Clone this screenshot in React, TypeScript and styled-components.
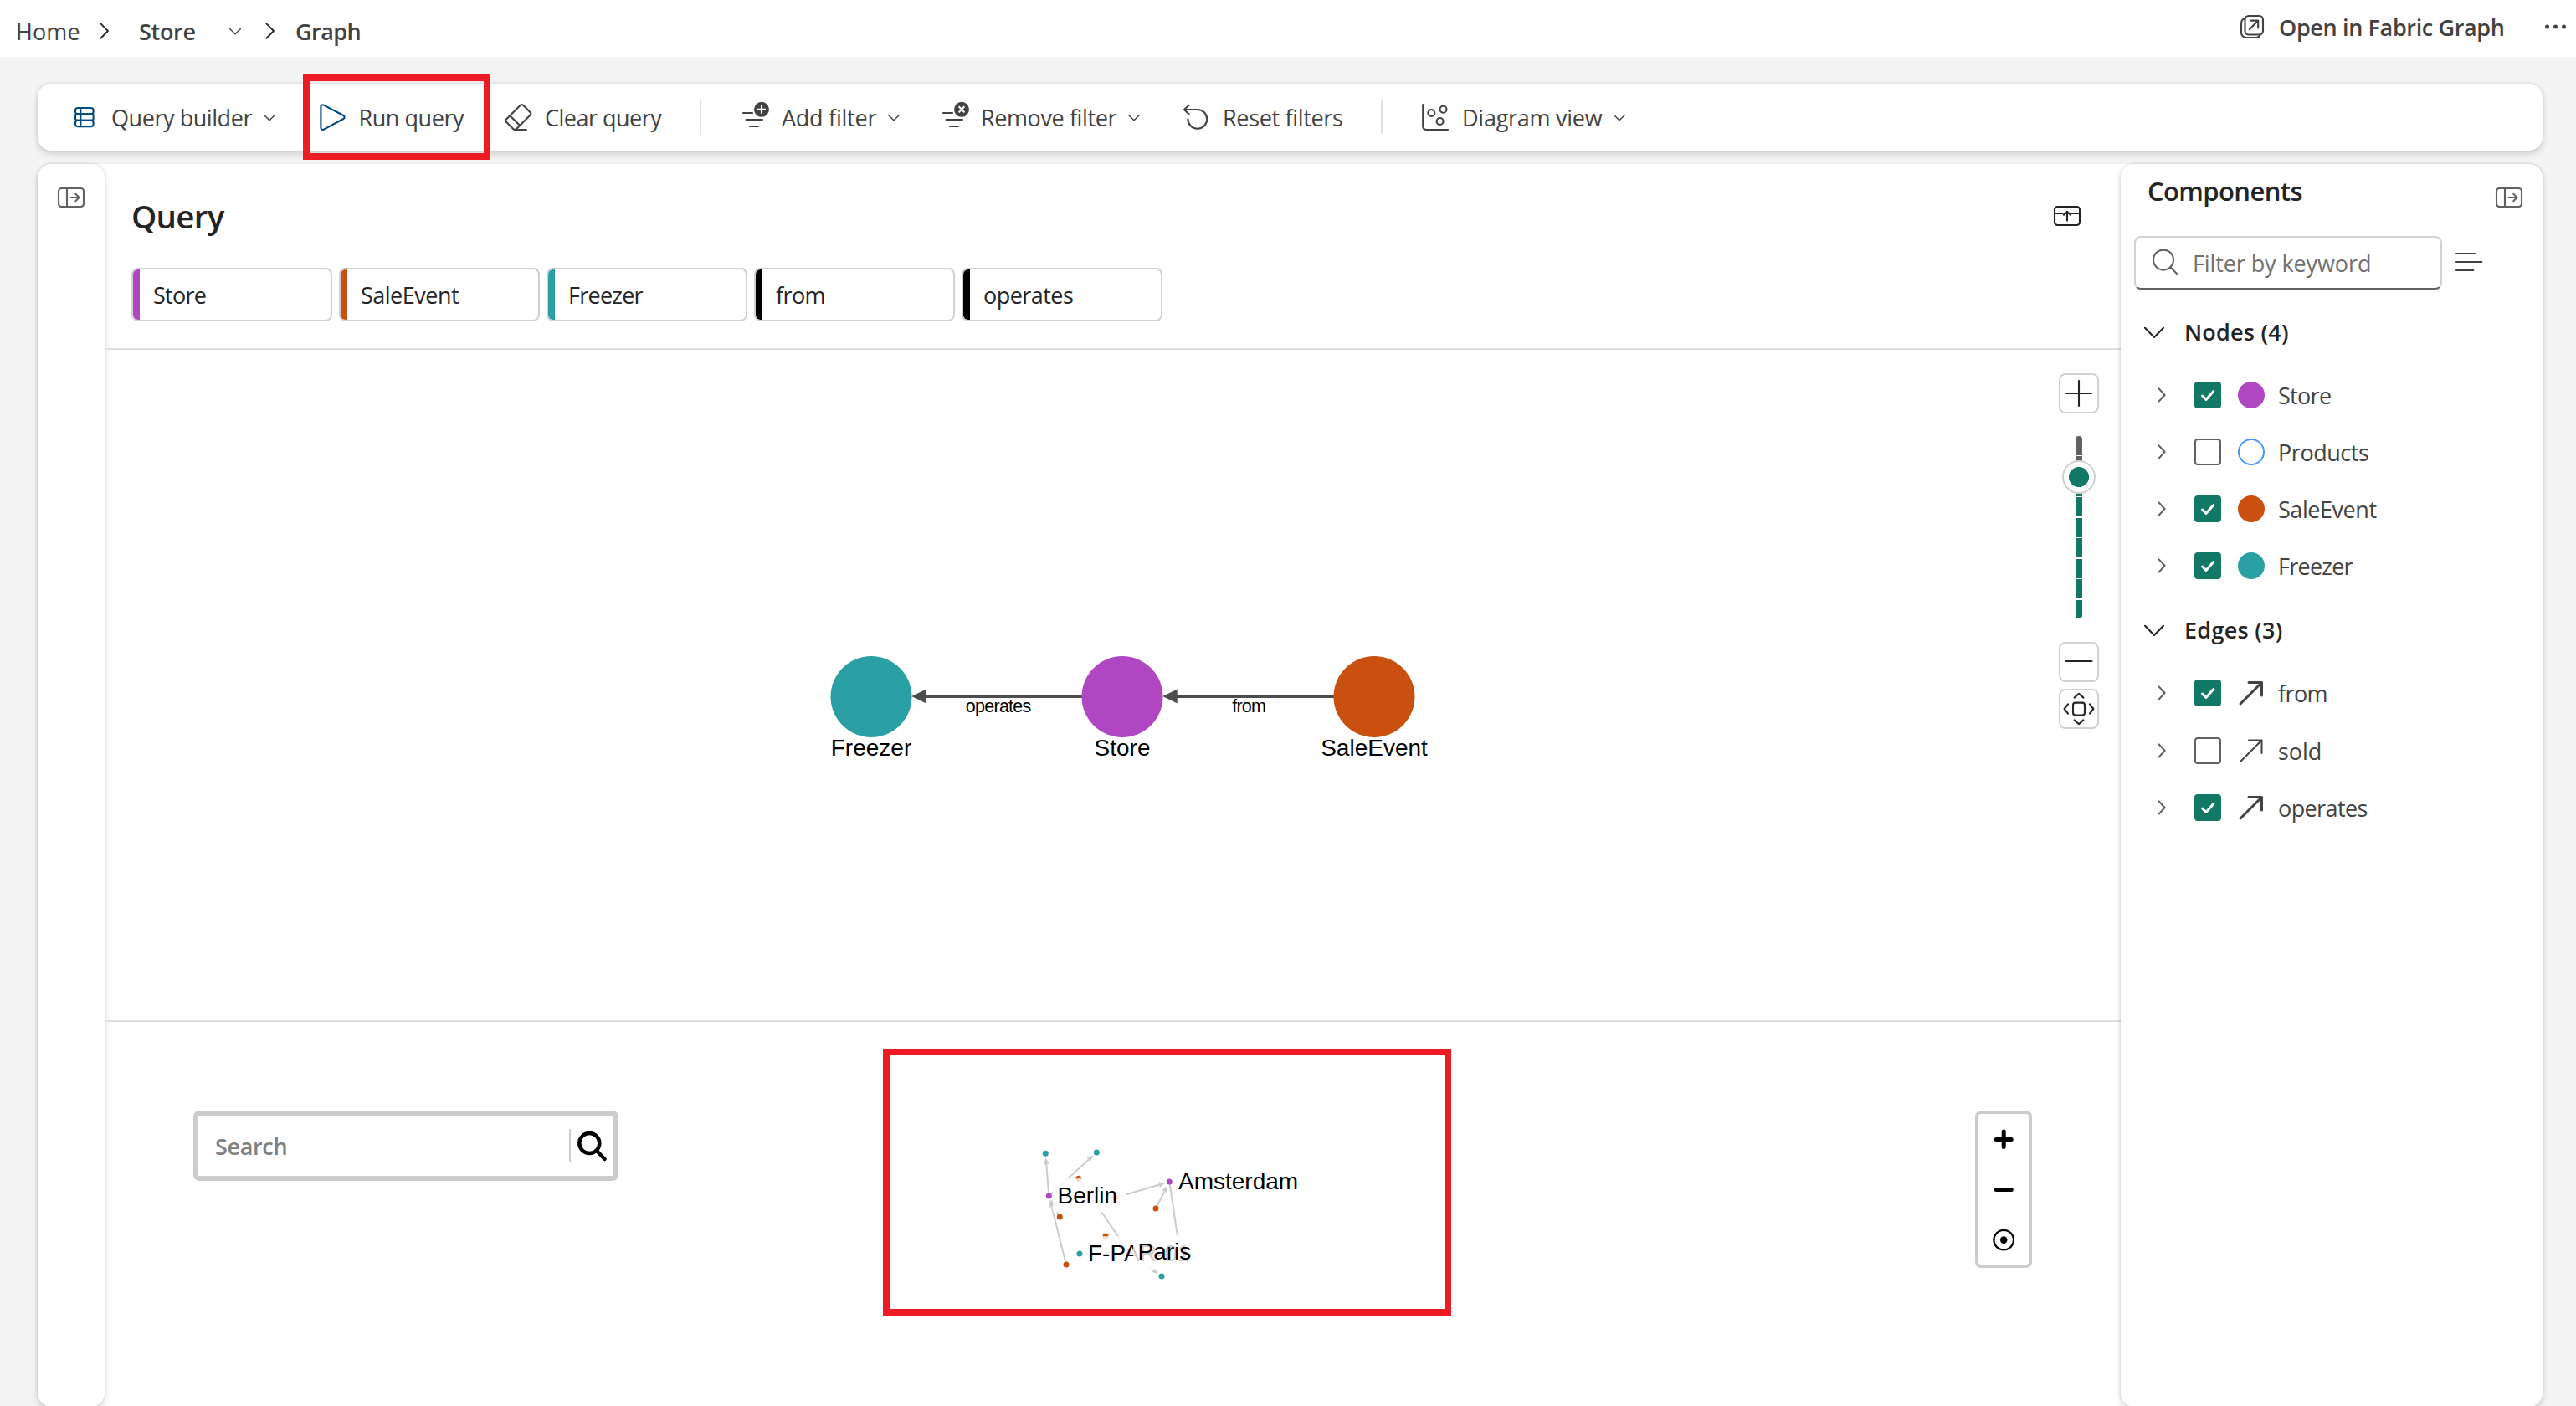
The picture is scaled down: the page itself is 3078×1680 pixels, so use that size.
import React from "react";
import styled, { createGlobalStyle } from "styled-components";

const UI_FONT = '"Open Sans", "Noto Sans", sans-serif';
const GRAPH_FONT = '"Liberation Sans", Arial, sans-serif';

const color = {
  ink: "#242424",
  text: "#424242",
  muted: "#616161",
  placeholder: "#707070",
  stroke: "#d1d1d1",
  divider: "#e0e0e0",
  brand: "#117865",
  brandBlue: "#004880",
  store: "#af47c3",
  sale: "#ca5010",
  freezer: "#2ba0a4",
  products: "#4894fe",
  callout: "#ed1c24",
};

const shadow = "0 0 4px rgba(0,0,0,0.12), 0 4px 8px rgba(0,0,0,0.14)";

const GlobalStyle = createGlobalStyle`
  *, *::before, *::after { box-sizing: border-box; }
  body { margin: 0; background: #f4f4f4; font-family: ${UI_FONT}; color: ${color.text}; }
  svg { display: block; flex: none; overflow: visible; }
`;

const Page = styled.div`
  position: relative;
  display: flex;
  flex-direction: column;
  width: 3078px;
  height: 1680px;
  overflow: hidden;
  background: #f4f4f4;
`;

const Text = styled.span<{ $ls?: number; $bold?: boolean; $w?: number; $size?: number; $color?: string }>`
  flex: none;
  width: ${(p) => (p.$w ? `${p.$w}px` : "auto")};
  padding-top: 2px;
  font-size: ${(p) => p.$size ?? 27}px;
  font-weight: ${(p) => (p.$bold ? 600 : 400)};
  letter-spacing: ${(p) => p.$ls ?? 0}px;
  line-height: 42px;
  color: ${(p) => p.$color ?? color.text};
  white-space: nowrap;
`;

/* ---------- header ---------- */

const Header = styled.header`
  display: flex;
  justify-content: space-between;
  flex: none;
  height: 68px;
  background: #fff;
`;

const Breadcrumb = styled.nav`
  display: flex;
  align-items: center;
  height: 73px;
  padding-left: 19px;
`;

const CrumbIcon = styled.span<{ $before: number; $after: number }>`
  margin: 0 ${(p) => p.$after}px 0 ${(p) => p.$before}px;
`;

const HeaderActions = styled.div`
  display: flex;
  align-items: center;
  height: 64px;
  padding-right: 11px;
`;

const OpenLink = styled.div`
  display: flex;
  align-items: center;
  gap: 13px;
  margin-right: 49px;
`;

/* ---------- toolbar ---------- */

const Toolbar = styled.div`
  display: flex;
  align-items: center;
  flex: none;
  height: 80px;
  margin: 32px 40px 0 45px;
  border-radius: 16px;
  background: #fff;
  box-shadow: ${shadow};
`;

const Tool = styled.div<{ $before: number; $gap: number }>`
  display: flex;
  align-items: center;
  margin-left: ${(p) => p.$before}px;
  & > span { margin-left: ${(p) => p.$gap}px; }
  & > svg:last-child:not(:first-child) { margin-left: 11px; }
`;

const ToolDivider = styled.div<{ $before: number }>`
  width: 2px;
  height: 40px;
  margin-left: ${(p) => p.$before}px;
  background: ${color.divider};
`;

/* ---------- workspace ---------- */

const Workspace = styled.div`
  display: flex;
  flex: none;
  height: 1485px;
  margin: 16px 40px 0 45px;
  border-radius: 16px;
  background: #fff;
  box-shadow: 0 0 2px rgba(0,0,0,0.1);
`;

const Rail = styled.aside`
  display: flex;
  justify-content: center;
  flex: none;
  width: 80px;
  padding-top: 22px;
  border-radius: 16px;
  background: #fff;
  box-shadow: ${shadow};
`;

const Center = styled.main`
  display: flex;
  flex-direction: column;
  flex: 1;
  min-width: 0;
`;

const QueryPane = styled.section`
  flex: none;
  height: 222px;
  border-bottom: 2px solid ${color.divider};
`;

const QueryTitleRow = styled.div`
  display: flex;
  align-items: center;
  justify-content: space-between;
  height: 122px;
  padding: 0 46px 0 32px;
`;

const Chips = styled.div`
  display: flex;
  gap: 8px;
  padding: 2px 0 0 32px;
`;

const Chip = styled.div<{ $bar: string }>`
  display: flex;
  align-items: center;
  width: 240px;
  height: 64px;
  overflow: hidden;
  border: 2px solid ${color.stroke};
  border-radius: 8px;
  background: #fff;
  &::before {
    content: "";
    width: 8px;
    height: 100%;
    margin-right: 16px;
    background: ${(p) => p.$bar};
  }
`;

const CanvasPane = styled.section`
  display: flex;
  flex: none;
  height: 803px;
  border-bottom: 2px solid ${color.divider};
`;

const ZoomColumn = styled.div`
  display: flex;
  flex-direction: column;
  align-items: center;
  width: 48px;
  padding-top: 28px;
`;

const ZoomButton = styled.div`
  display: flex;
  align-items: center;
  justify-content: center;
  flex: none;
  width: 48px;
  height: 48px;
  border: 2px solid ${color.stroke};
  border-radius: 8px;
  background: #fff;
  & + & { margin-top: 8px; }
`;

const Track = styled.div`
  position: relative;
  flex: none;
  width: 8px;
  height: 218px;
  margin: 27px 0 28px;
  border-radius: 4px;
  background:
    repeating-linear-gradient(to bottom, transparent 0 22.6px, #fff 22.6px 24.5px),
    linear-gradient(to bottom, ${color.muted} 49px, ${color.brand} 49px);
`;

const Thumb = styled.div`
  position: absolute;
  left: -16px;
  top: 29px;
  width: 40px;
  height: 40px;
  border: 2px solid ${color.stroke};
  border-radius: 50%;
  background: radial-gradient(circle, ${color.brand} 11.6px, #fff 12.4px);
`;

const ResultPane = styled.section`
  display: flex;
  flex: 1;
  align-items: flex-start;
  padding-left: 106px;
`;

const ResultSearch = styled.div`
  display: flex;
  align-items: center;
  flex: none;
  width: 508px;
  height: 84px;
  margin-top: 106px;
  padding: 0 5px 0 20px;
  border: 6px solid #ccc;
  border-radius: 7px;
  background: #fff;
`;

const SearchDivider = styled.div`
  width: 2px;
  height: 40px;
  margin: 0 6px 0 auto;
  background: #ccc;
`;

const ResultZoom = styled.div`
  display: flex;
  flex-direction: column;
  align-items: center;
  gap: 20px;
  flex: none;
  width: 68px;
  height: 188px;
  margin-top: 106px;
  padding-top: 10px;
  border: 4px solid #ccc;
  border-radius: 7px;
  background: #fff;
`;

/* ---------- components panel ---------- */

const Panel = styled.aside`
  flex: none;
  width: 504px;
  border-radius: 16px;
  background: #fff;
  box-shadow: ${shadow};
`;

const PanelHeader = styled.div`
  display: flex;
  justify-content: space-between;
  align-items: flex-start;
  height: 86px;
  padding: 9px 22px 0 32px;
  & > svg { margin-top: 13px; }
`;

const FilterRow = styled.div`
  display: flex;
  align-items: center;
  gap: 12px;
  padding-left: 16px;
  margin-bottom: 8px;
`;

const FilterInput = styled.div`
  display: flex;
  align-items: center;
  gap: 15px;
  width: 368px;
  height: 64px;
  padding-left: 17px;
  border: 2px solid ${color.stroke};
  border-bottom-color: ${color.muted};
  border-radius: 8px;
`;

const GroupHeader = styled.div`
  display: flex;
  align-items: center;
  gap: 22px;
  height: 84px;
  padding-left: 26px;
`;

const Rows = styled.div`
  display: flex;
  flex-direction: column;
`;

const Row = styled.div`
  display: flex;
  align-items: center;
  height: 68px;
  padding-left: 41px;
  ${Rows} + ${GroupHeader} + ${Rows} & { height: 68.4px; }
`;

const Check = styled.span<{ $on: boolean }>`
  width: 32px;
  height: 32px;
  margin: 0 20px 0 31px;
  border-radius: 4px;
  border: 2px solid ${(p) => (p.$on ? color.brand : color.muted)};
  background: ${(p) => (p.$on ? color.brand : "#fff")};
`;

const Swatch = styled.span<{ $fill: string; $hollow?: boolean }>`
  width: 32px;
  height: 32px;
  border-radius: 50%;
  border: 2px solid ${(p) => p.$fill};
  background: ${(p) => (p.$hollow ? "#fff" : p.$fill)};
`;

const RowLabel = styled(Text)`
  margin-left: 16px;
`;

/* ---------- annotation ---------- */

const Callout = styled.div<{ $x: number; $y: number; $w: number; $h: number }>`
  position: absolute;
  left: ${(p) => p.$x}px;
  top: ${(p) => p.$y}px;
  width: ${(p) => p.$w}px;
  height: ${(p) => p.$h}px;
  border: 8px solid ${color.callout};
`;

/* ---------- icons ---------- */

type IconProps = { w: number; h: number; stroke?: string; sw?: number; children: React.ReactNode };

const Icon = ({ w, h, stroke = color.text, sw = 2.1, children }: IconProps) => (
  <svg width={w} height={h} viewBox={`0 0 ${w} ${h}`} fill="none" stroke={stroke} strokeWidth={sw} strokeLinecap="round" strokeLinejoin="round">
    {children}
  </svg>
);

const SmallChevron = () => (
  <Icon w={16} h={16} sw={1.4}><path d="M1.6 5.4 8 11.8 14.4 5.4" /></Icon>
);

const CrumbChevron = () => (
  <Icon w={20} h={24} stroke={color.ink} sw={1.8}><path d="M5.2 3.2 14 12 5.2 20.8" /></Icon>
);

const PanelIcon = () => (
  <Icon w={36} h={36} stroke={color.muted}>
    <rect x="3" y="7" width="30" height="22" rx="3.5" />
    <path d="M13 7V29M17.5 18H27M23.3 13.8 27.5 18 23.3 22.2" />
  </Icon>
);

const FilterIcon = ({ kind }: { kind: "add" | "remove" }) => (
  <Icon w={34} h={40}>
    <path d="M2 15H13M5.5 23H25M10 31H20" />
    <circle cx="24" cy="10.8" r="9" fill={color.text} stroke="none" />
    <path stroke="#fff" strokeLinecap="butt" d={kind === "add" ? "M24 5.8V15.8M19 10.8H29" : "M20.6 7.2 27.4 14.4M27.4 7.2 20.6 14.4"} />
  </Icon>
);

const EdgeArrow = ({ bold }: { bold: boolean }) => (
  <Icon w={32} h={32} sw={bold ? 3 : 2}><path d="M3 29 28.5 3.5M13 3.5H28.5V19" /></Icon>
);

/* ---------- data ---------- */

const chips: [string, string, number][] = [
  ["Store", color.store, -0.75],
  ["SaleEvent", color.sale, -0.5],
  ["Freezer", color.freezer, -0.75],
  ["from", "#000", -0.6],
  ["operates", "#000", -0.55],
];

const nodes: { name: string; fill: string; on: boolean; ls: number }[] = [
  { name: "Store", fill: color.store, on: true, ls: -0.7 },
  { name: "Products", fill: color.products, on: false, ls: -0.45 },
  { name: "SaleEvent", fill: color.sale, on: true, ls: -0.45 },
  { name: "Freezer", fill: color.freezer, on: true, ls: -0.75 },
];

const edges: { name: string; on: boolean; ls: number }[] = [
  { name: "from", on: true, ls: -0.6 },
  { name: "sold", on: false, ls: -0.1 },
  { name: "operates", on: true, ls: -0.6 },
];

type Pt = [number, number];
const berlin: Pt = [1253.3, 1429];
const amsterdam: Pt = [1397.3, 1412];
const paris: Pt = [1349.3, 1496.5];

const resultNodes: [Pt, string][] = [
  [[1249.3, 1378.3], color.freezer],
  [[1310.3, 1376.9], color.freezer],
  [[1408.5, 1487], color.freezer],
  [[1290, 1498], color.freezer],
  [[1388, 1525], color.freezer],
  [[1288.7, 1408.3], color.sale],
  [[1333, 1431], color.sale],
  [[1381, 1444], color.sale],
  [[1266.3, 1454], color.sale],
  [[1321, 1477], color.sale],
  [[1274, 1511], color.sale],
  [berlin, color.store],
  [amsterdam, color.store],
  [paris, color.store],
];

const resultEdges: [Pt, Pt][] = [
  [berlin, [1249.3, 1378.3]],
  [berlin, [1310.3, 1376.9]],
  [[1288.7, 1408.3], paris],
  [[1333, 1431], amsterdam],
  [[1381, 1444], amsterdam],
  [amsterdam, [1408.5, 1487]],
  [[1266.3, 1454], berlin],
  [[1274, 1511], berlin],
  [[1321, 1477], paris],
  [paris, [1290, 1498]],
  [paris, [1388, 1525]],
];

const Arrow = ({ from, to }: { from: Pt; to: Pt }) => {
  const dx = to[0] - from[0];
  const dy = to[1] - from[1];
  const len = Math.hypot(dx, dy);
  const ux = dx / len;
  const uy = dy / len;
  const tip: Pt = [to[0] - ux * 5, to[1] - uy * 5];
  const back: Pt = [tip[0] - ux * 8, tip[1] - uy * 8];
  return (
    <>
      <line x1={from[0]} y1={from[1]} x2={back[0]} y2={back[1]} stroke="#ccc" strokeWidth="2" />
      <polygon fill="#ccc" points={`${tip} ${back[0] - uy * 3.2},${back[1] + ux * 3.2} ${back[0] + uy * 3.2},${back[1] - ux * 3.2}`} />
    </>
  );
};

const resultLabels: { text: string; x: number; y: number; w: number }[] = [
  { text: "Berlin", x: 1263.5, y: 1437.7, w: 83 },
  { text: "Amsterdam", x: 1408, y: 1421, w: 154 },
  { text: "F-PAR-01", x: 1300, y: 1506.7, w: 132 },
  { text: "Paris", x: 1359.5, y: 1504.7, w: 76 },
];

const QueryDiagram = () => (
  <svg width="2335" height="801" viewBox="125 418 2335 801" fontFamily={GRAPH_FONT} textAnchor="middle">
    <path d="M1293 832H1106M1594 832H1406" stroke="#4d4d4d" strokeWidth="4" />
    <path d="M1089.3 832 1106.7 823.4V840.6ZM1389.3 832 1406.7 823.4V840.6Z" fill="#4d4d4d" />
    <circle cx="1041" cy="832.5" r="48.5" fill={color.freezer} />
    <circle cx="1341" cy="832.5" r="48.5" fill={color.store} />
    <circle cx="1642" cy="832.5" r="48.5" fill={color.sale} />
    <g fontSize="28" fill="#000">
      <text x="1041" y="902.7">Freezer</text>
      <text x="1341" y="902.7">Store</text>
      <text x="1642" y="902.7">SaleEvent</text>
    </g>
    <g fontSize="21.5" letterSpacing="-0.75" fill="#000">
      <text x="1192.7" y="851">operates</text>
      <text x="1492.2" y="851">from</text>
    </g>
  </svg>
);

const ResultGraph = () => (
  <svg width="1621" height="459" viewBox="739 1221 1621 459" fontFamily={GRAPH_FONT}>
    {resultEdges.map(([a, b], i) => <Arrow key={i} from={a} to={b} />)}
    {resultNodes.map(([p, fill], i) => <circle key={i} cx={p[0]} cy={p[1]} r="3.5" fill={fill} />)}
    {resultLabels.map((l) => (
      <g key={l.text}>
        <rect x={l.x - 5.5} y={l.y - 29.5} width={l.w + 5} height="40" fill="#fff" fillOpacity="0.8" />
        <text x={l.x} y={l.y} fontSize="28" fill="#000">{l.text}</text>
      </g>
    ))}
  </svg>
);

export default function App() {
  return (
    <Page>
      <GlobalStyle />
      <Header>
        <Breadcrumb>
          <Text $w={78} $ls={0.1}>Home</Text>
          <CrumbIcon $before={18} $after={31}><CrumbChevron /></CrumbIcon>
          <Text $bold $w={68} $ls={-0.3}>Store</Text>
          <CrumbIcon $before={39} $after={24}><SmallChevron /></CrumbIcon>
          <CrumbIcon $before={0} $after={20}><CrumbChevron /></CrumbIcon>
          <Text $bold $ls={-0.55}>Graph</Text>
        </Breadcrumb>
        <HeaderActions>
          <OpenLink>
            <Icon w={36} h={36}>
              <rect x="8.5" y="5" width="21.5" height="22.5" rx="4.5" />
              <path d="M8.4 8.2C5.4 8.8 4 11 4 14V25a6 6 0 0 0 6 6H21c3 0 5-1.2 5.5-3.5M13.8 21.3 24 10.8M15.6 10.6H24.2V19.6" />
            </Icon>
            <Text $bold $w={269} $ls={-0.36}>Open in Fabric Graph</Text>
          </OpenLink>
          <svg width="26" height="8" viewBox="0 0 26 8" fill={color.text}>
            <circle cx="2.5" cy="4" r="2.5" /><circle cx="12.5" cy="4" r="2.5" /><circle cx="22.5" cy="4" r="2.5" />
          </svg>
        </HeaderActions>
      </Header>

      <Toolbar>
        <Tool $before={43} $gap={19}>
          <Icon w={26} h={40} stroke={color.brandBlue}>
            <rect x="2" y="9" width="21.6" height="7.4" rx="3" />
            <rect x="2" y="16.4" width="21.6" height="7.4" rx="2.2" />
            <rect x="2" y="23.8" width="21.6" height="7.4" rx="3" />
            <path d="M8.3 9V31" />
          </Icon>
          <Text $w={170} $ls={-0.44}>Query builder</Text>
          <SmallChevron />
        </Tool>
        <Tool $before={51} $gap={13.5}>
          <Icon w={34} h={40} stroke={color.brandBlue}>
            <path d="M5.9 5.6 29.4 18a2.3 2.3 0 0 1 0 4L5.9 34.6a2.3 2.3 0 0 1-3.5-2V7.6a2.3 2.3 0 0 1 3.5-2Z" />
          </Icon>
          <Text $w={127} $ls={-0.45}>Run query</Text>
        </Tool>
        <Tool $before={46.5} $gap={15}>
          <Icon w={34} h={40}>
            <path d="M19.8 5.8Q21.5 4.2 23.2 5.8L31.6 14.2Q33.2 15.9 31.6 17.6L15.4 33.8Q13.2 35.8 11 33.8L3 25.8Q1.4 24 3 22.4ZM7.6 18.4 19 29.8M12.6 35H27" />
          </Icon>
          <Text $w={141} $ls={-0.5}>Clear query</Text>
        </Tool>
        <ToolDivider $before={44} />
        <Tool $before={48} $gap={14}>
          <FilterIcon kind="add" />
          <Text $w={115} $ls={-0.25}>Add filter</Text>
          <SmallChevron />
        </Tool>
        <Tool $before={49} $gap={13}>
          <FilterIcon kind="remove" />
          <Text $w={164} $ls={-0.4}>Remove filter</Text>
          <SmallChevron />
        </Tool>
        <Tool $before={49} $gap={15}>
          <Icon w={34} h={40}><path d="M8.6 5.8 3 11 8.6 16.4M3.4 11H18.8A11.4 11.4 0 1 1 7.4 22.2" /></Icon>
          <Text $w={144} $ls={-0.34}>Reset filters</Text>
        </Tool>
        <ToolDivider $before={45} />
        <Tool $before={46} $gap={15}>
          <Icon w={34} h={40}>
            <path d="M2.2 5V30.5Q2.2 35 6.7 35H32" />
            <circle cx="12.3" cy="15" r="4" /><circle cx="26.5" cy="10.7" r="4" /><circle cx="22.6" cy="25" r="4" />
          </Icon>
          <Text $w={169} $ls={-0.26}>Diagram view</Text>
          <SmallChevron />
        </Tool>
      </Toolbar>

      <Workspace>
        <Rail><PanelIcon /></Rail>

        <Center>
          <QueryPane>
            <QueryTitleRow>
              <Text $bold $size={38.5} $ls={-0.7} $color={color.ink}>Query</Text>
              <Icon w={36} h={36} stroke={color.ink}>
                <rect x="3" y="8" width="30" height="22" rx="3.5" />
                <path d="M3 16H12.5M23.5 16H33M18 24.6V14M14 17.8 18 13.8 22 17.8" />
              </Icon>
            </QueryTitleRow>
            <Chips>
              {chips.map(([name, bar, ls]) => (
                <Chip key={name} $bar={bar}><Text $ls={ls} $color={color.ink}>{name}</Text></Chip>
              ))}
            </Chips>
          </QueryPane>

          <CanvasPane>
            <QueryDiagram />
            <ZoomColumn>
              <ZoomButton><Icon w={34} h={34} stroke={color.ink}><path d="M17 2V32M2 17H32" /></Icon></ZoomButton>
              <Track><Thumb /></Track>
              <ZoomButton><Icon w={34} h={34} stroke={color.ink}><path d="M1.5 16H32.5" /></Icon></ZoomButton>
              <ZoomButton>
                <Icon w={40} h={40} stroke={color.ink}>
                  <rect x="13" y="12.6" width="14" height="15" rx="3" />
                  <path d="M14.6 6.6 20 1.8 25.4 6.6M14.6 33.4 20 38.2 25.4 33.4M7 14.4 2.6 20 7 25.6M33 14.4 37.4 20 33 25.6" />
                </Icon>
              </ZoomButton>
            </ZoomColumn>
          </CanvasPane>

          <ResultPane>
            <ResultSearch>
              <Text $bold $ls={-0.35} $color="#808080">Search</Text>
              <SearchDivider />
              <Icon w={40} h={40} stroke="#000" sw={4.5}>
                <circle cx="16.3" cy="17" r="12" />
                <path d="M25 26 34.6 36" />
              </Icon>
            </ResultSearch>
            <ResultGraph />
            <ResultZoom>
              <Icon w={40} h={40} stroke="#000" sw={5}><path d="M20.2 11V29.4M11.2 20.4H29.2" /></Icon>
              <Icon w={40} h={40} stroke="#000" sw={5}><path d="M11.2 20.6H29.2" /></Icon>
              <Icon w={40} h={40} stroke="#000" sw={2.3}>
                <circle cx="20.2" cy="20.6" r="11.8" />
                <circle cx="20.2" cy="20.6" r="4.3" fill="#000" stroke="none" />
              </Icon>
            </ResultZoom>
          </ResultPane>
        </Center>

        <Panel>
          <PanelHeader>
            <Text $bold $size={31} $ls={-0.6} $color={color.ink}>Components</Text>
            <PanelIcon />
          </PanelHeader>
          <FilterRow>
            <FilterInput>
              <Icon w={36} h={36} stroke={color.muted}>
                <circle cx="16" cy="14.6" r="12" />
                <path d="M24.6 23.6 32 31" />
              </Icon>
              <Text $ls={-0.1} $color={color.placeholder}>Filter by keyword</Text>
            </FilterInput>
            <Icon w={40} h={36}><path d="M5 7H27M5 17H35.4M5 27H25.4" /></Icon>
          </FilterRow>

          <GroupHeader>
            <Icon w={28} h={28} stroke={color.ink}><path d="M3 9.8 14 21 25 9.8" /></Icon>
            <Text $bold $ls={0.22} $color={color.ink}>Nodes (4)</Text>
          </GroupHeader>
          <Rows>
            {nodes.map((n) => (
              <Row key={n.name}>
                <Icon w={16} h={20} stroke={color.muted}><path d="M4.6 2.4 11.6 10 4.6 17.6" /></Icon>
                <Check $on={n.on}>{n.on && <Icon w={28} h={28} stroke="#fff" sw={3}><path d="M7.6 15 12 19.4 20.8 9.6" /></Icon>}</Check>
                <Swatch $fill={n.fill} $hollow={!n.on} />
                <RowLabel $ls={n.ls}>{n.name}</RowLabel>
              </Row>
            ))}
          </Rows>

          <GroupHeader>
            <Icon w={28} h={28} stroke={color.ink}><path d="M3 9.8 14 21 25 9.8" /></Icon>
            <Text $bold $ls={0.27} $color={color.ink}>Edges (3)</Text>
          </GroupHeader>
          <Rows>
            {edges.map((e) => (
              <Row key={e.name}>
                <Icon w={16} h={20} stroke={color.muted}><path d="M4.6 2.4 11.6 10 4.6 17.6" /></Icon>
                <Check $on={e.on}>{e.on && <Icon w={28} h={28} stroke="#fff" sw={3}><path d="M7.6 15 12 19.4 20.8 9.6" /></Icon>}</Check>
                <EdgeArrow bold={e.on} />
                <RowLabel $ls={e.ls}>{e.name}</RowLabel>
              </Row>
            ))}
          </Rows>
        </Panel>
      </Workspace>

      <Callout $x={362} $y={89} $w={224} $h={102} />
      <Callout $x={1055} $y={1253} $w={679} $h={319} />
    </Page>
  );
}
